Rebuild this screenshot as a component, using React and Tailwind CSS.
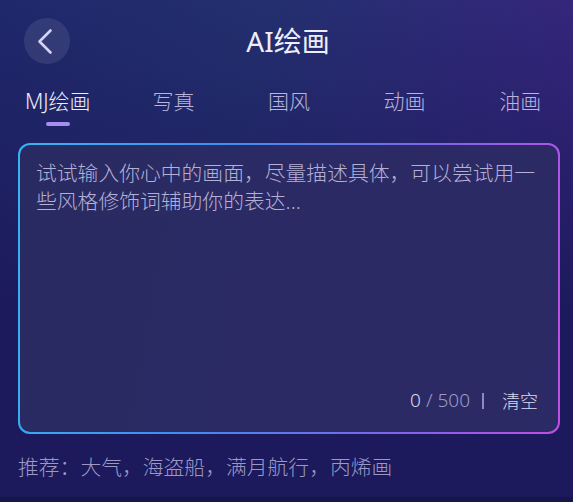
import { useState } from "react";

const TABS = ["MJ绘画", "写真", "国风", "动画", "油画"];

export default function App() {
  const [active, setActive] = useState(0);
  const [text, setText] = useState("");

  return (
    <div className="relative w-[573px] h-[502px] overflow-hidden font-['Noto_Sans','Noto_Sans_CJK_SC',sans-serif] font-light bg-[#1c1a5c] bg-[linear-gradient(to_bottom,rgba(28,26,92,0)_0%,#1c1a5c_62%),linear-gradient(100deg,#1f286b_0%,#23306f_40%,#3a237f_100%)]">
      {/* header */}
      <div className="grid grid-cols-[1fr_auto_1fr] items-center pt-[18px] px-[24px]">
        <button className="w-[46px] h-[46px] rounded-full bg-white/[0.09] flex items-center justify-center">
          <svg width="46" height="46" viewBox="0 0 46 46" fill="none">
            <path d="M26.5 12.5 L15.5 23.5 L26.5 34.5" stroke="#d6d3f2" strokeWidth="2.6" strokeLinecap="round" strokeLinejoin="round" />
          </svg>
        </button>
        <h1 className="text-[28px] leading-none text-[#eeedfa] font-normal ml-[3px]">AI绘画</h1>
        <div />
      </div>

      {/* tabs */}
      <div className="grid grid-cols-5 w-[578px] mt-[25px]">
        {TABS.map((t, i) => (
          <button key={t} onClick={() => setActive(i)} className="flex flex-col items-center">
            <span className={`text-[21px] leading-[24px] ${active === i ? "text-[#eeedfa]" : "text-[#b8b5dc]"}`}>{t}</span>
            <span className={`mt-[9px] w-6 h-1 rounded-full ${active === i ? "bg-[#a88cf2]" : "bg-transparent"}`} />
          </button>
        ))}
      </div>

      {/* input box */}
      <div className="ml-[18px] mt-[17px] w-[542px] h-[291px] rounded-[12px] p-[2px] bg-[linear-gradient(100deg,#37b4f2_0%,#3f8ef0_35%,#7a66ec_70%,#c24ee2_100%)]">
        <div className="h-full rounded-[10px] bg-[linear-gradient(100deg,#2a2a63_0%,#2c2a66_100%)] flex flex-col px-[16px] pt-[14px] pb-[22px]">
          <textarea
            value={text}
            maxLength={500}
            onChange={(e) => setText(e.target.value)}
            placeholder="试试输入你心中的画面，尽量描述具体，可以尝试用一些风格修饰词辅助你的表达..."
            className="flex-1 w-full resize-none bg-transparent outline-none text-[20.8px] leading-[28.4px] text-[#e4e2f6] placeholder:text-[#b3b0d6]"
          />
          <div className="flex items-center justify-end pr-[4px] leading-none">
            <span className="text-[19px] text-[#dcdaf0]">{text.length}</span>
            <span className="text-[19px] text-[#9c9ac8] ml-[5px]">/ 500</span>
            <span className="ml-[12px] w-[2px] h-[16px] bg-[#8e8cbc]" />
            <button onClick={() => setText("")} className="ml-[18px] text-[18px] text-[#dcdaf0]">清空</button>
          </div>
        </div>
      </div>

      {/* suggestions */}
      <p className="ml-[18px] mt-[19px] text-[20.8px] leading-[28px] text-[#9b99c4]">推荐：大气，海盗船，满月航行，丙烯画</p>

      <div className="absolute left-0 right-0 bottom-0 h-[5px] bg-[#16154c]" />
    </div>
  );
}
